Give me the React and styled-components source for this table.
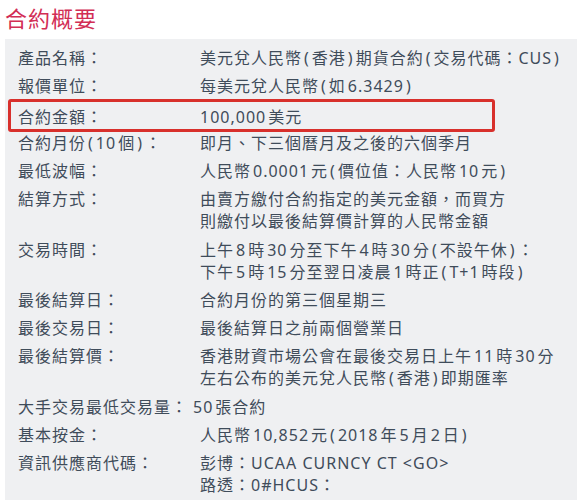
import React from 'react';
import styled, { createGlobalStyle } from 'styled-components';

const GlobalStyle = createGlobalStyle`
  html, body {
    margin: 0;
    padding: 0;
    background: #ffffff;
  }
  body {
    font-family: "Noto Sans", "Noto Sans CJK TC", sans-serif;
  }
`;

const Page = styled.div`
  width: 577px;
  height: 500px;
  overflow: hidden;
`;

const Title = styled.h2`
  margin: 0;
  padding: 3px 0 0 5px;
  height: 39px;
  box-sizing: border-box;
  font-size: 22px;
  line-height: 30px;
  font-weight: 400;
  letter-spacing: 1px;
  color: #d22e55;
`;

const Panel = styled.div`
  margin-left: 5px;
  padding-top: 5px;
  background: #eff0f2;
  min-height: 460px;
`;

const Row = styled.div`
  position: relative;
  display: grid;
  grid-template-columns: 182px 1fr;
  padding: 3px 0 3.25px 13px;
  font-size: 16px;
  line-height: 22px;
  letter-spacing: 1px;
  color: #3f4c5a;
  text-autospace: normal;

  ${({ $marked }) =>
    $marked &&
    `
    padding-top: 5.5px;
    padding-bottom: 0.75px;

    &::after {
      content: '';
      position: absolute;
      left: 3px;
      width: 481px;
      top: -2px;
      bottom: -3px;
      border: 3px solid #d8302c;
      border-radius: 3px;
    }
  `}
`;

const Label = styled.div`
  white-space: nowrap;
`;

const Value = styled.div`
  white-space: nowrap;
  margin-left: ${({ $pull }) => ($pull ? '-7px' : '0')};
`;

const Paren = styled.span`
  margin: 0 2px;
`;

// wrap the parentheses so they get a little air, like the original
const withParens = (text) =>
  text.split(/([()])/).map((part, i) =>
    part === '(' || part === ')' ? <Paren key={i}>{part}</Paren> : part
  );

const rows = [
  ['產品名稱：', ['美元兌人民幣(香港)期貨合約(交易代碼：CUS)']],
  ['報價單位：', ['每美元兌人民幣(如6.3429)']],
  ['合約金額：', ['100,000美元'], true],
  ['合約月份(10個)：', ['即月、下三個曆月及之後的六個季月']],
  ['最低波幅：', ['人民幣0.0001元(價位值：人民幣10元)']],
  ['結算方式：', ['由賣方繳付合約指定的美元金額，而買方', '則繳付以最後結算價計算的人民幣金額']],
  ['交易時間：', ['上午8時30分至下午4時30分(不設午休)：', '下午5時15分至翌日凌晨1時正(T+1時段)']],
  ['最後結算日：', ['合約月份的第三個星期三']],
  ['最後交易日：', ['最後結算日之前兩個營業日']],
  ['最後結算價：', ['香港財資市場公會在最後交易日上午11時30分', '左右公布的美元兌人民幣(香港)即期匯率']],
  ['大手交易最低交易量：', ['50張合約'], false, true],
  ['基本按金：', ['人民幣10,852元(2018年5月2日)']],
  ['資訊供應商代碼：', ['彭博：UCAA CURNCY CT <GO>', '路透：0#HCUS：']],
];

export default function App() {
  return (
    <Page>
      <GlobalStyle />
      <Title>合約概要</Title>
      <Panel>
        {rows.map(([label, lines, marked, pull]) => (
          <Row key={label} $marked={marked}>
            <Label>{withParens(label)}</Label>
            <Value $pull={pull}>
              {lines.map((line) => (
                <div key={line}>{withParens(line)}</div>
              ))}
            </Value>
          </Row>
        ))}
      </Panel>
    </Page>
  );
}
